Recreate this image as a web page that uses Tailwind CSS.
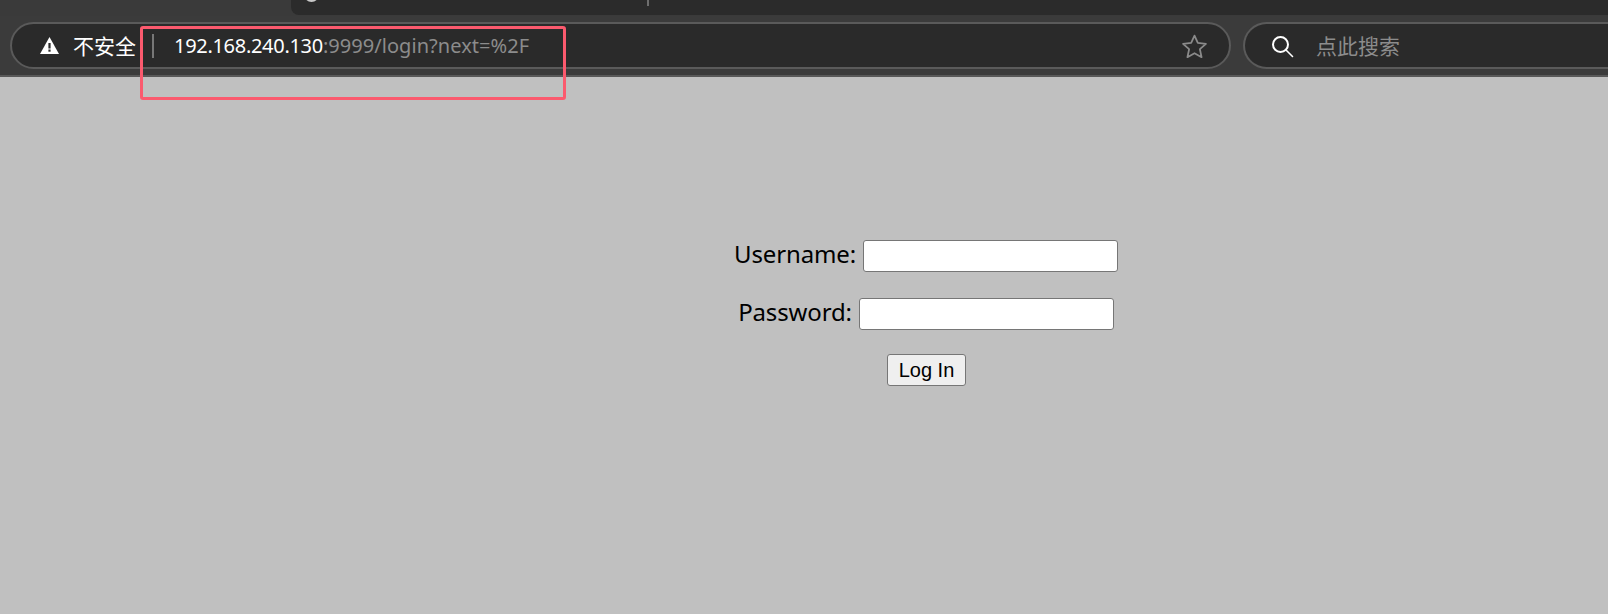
<!DOCTYPE html>
<html lang="zh">
<head>
<meta charset="utf-8">
<title>Login</title>
<script src="https://cdn.jsdelivr.net/npm/@tailwindcss/browser@4"></script>
</head>
<body class="m-0 h-[614px] w-[1608px] overflow-hidden bg-[#c0c0c0] font-['Noto_Sans','Noto_Sans_CJK_SC',sans-serif]">
<div class="relative h-full w-full">
  <header class="h-[77px] border-b-2 border-[#585858] bg-[#3b3b3b]">
    <div class="flex h-[16px] bg-[#3a3a3a] pl-[291px]">
      <div class="relative h-[15px] flex-1 overflow-hidden rounded-bl-lg bg-[#2b2b2b]">
        <div class="absolute left-[13px] top-[-13px] h-[15px] w-[15px] rounded-full border-[3px] border-[#c8c8c8]"></div>
        <div class="absolute left-[356px] top-0 h-[6px] w-[2px] bg-[#6e6e6e]"></div>
      </div>
    </div>
    <div class="flex gap-[12px] pl-[10px] pt-[6px]">
      <div class="flex h-[47px] w-[1221px] items-center rounded-full border-2 border-[#5a5a5a] bg-[#2a2a2a]">
        <svg class="ml-[28px] h-[19px] w-[19px]" viewBox="0 0 19 19"><path fill="#fff" d="M9.5 1 19 18H0Z"/><rect x="8.4" y="7" width="2.2" height="5.5" fill="#2a2a2a"/><rect x="8.4" y="13.5" width="2.2" height="2.2" fill="#2a2a2a"/></svg>
        <span class="ml-[14px] whitespace-nowrap pt-[2px] text-[21px] leading-none text-white">不安全</span>
        <span class="ml-[16px] h-[24px] w-[2px] bg-[#777777]"></span>
        <span class="ml-[20px] whitespace-nowrap pt-[1px] text-[20px] leading-none tracking-[-0.3px] text-white">192.168.240.130<span class="tracking-[0.05px] text-[#8c8c8c]">:9999/login?next=%2F</span></span>
        <svg class="ml-auto mr-[21px] mt-[1px] h-[27px] w-[27px]" viewBox="0 0 26 26" fill="none" stroke="#8a8a8a" stroke-width="1.7" stroke-linejoin="round"><path d="M13 2.5 16.2 9.6 24 10.4 18.2 15.6 19.8 23.3 13 19.4 6.2 23.3 7.8 15.6 2 10.4 9.8 9.6Z"/></svg>
      </div>
      <div class="flex h-[47px] flex-1 items-center rounded-l-full border-y-2 border-l-2 border-[#5a5a5a] bg-[#2a2a2a]">
        <svg class="ml-[25px] h-[24px] w-[24px]" viewBox="0 0 24 24" fill="none" stroke="#fff" stroke-linecap="round"><circle cx="10.5" cy="10.5" r="7.5" stroke-width="2"/><path d="M16 16 22.5 22.5" stroke-width="1.6"/></svg>
        <span class="ml-[22px] whitespace-nowrap pt-[1px] text-[21px] leading-none text-[#8c8c8c]">点此搜索</span>
      </div>
    </div>
  </header>
  <main class="flex flex-col items-center pl-[244px] pt-[163px] text-black">
    <div class="flex h-[32px] items-center gap-[7px]">
      <label class="pb-[5px] text-[24px] leading-none tracking-[-0.15px]">Username:</label>
      <input type="text" class="box-border h-[32px] w-[255px] rounded-[3px] border border-[#767676] bg-white">
    </div>
    <div class="mt-[26px] flex h-[32px] items-center gap-[7px]">
      <label class="pb-[5px] text-[24px] leading-none tracking-[-0.15px]">Password:</label>
      <input type="password" class="box-border h-[32px] w-[255px] rounded-[3px] border border-[#767676] bg-white">
    </div>
    <button class="ml-[1px] mt-[24px] box-border h-[32px] w-[79px] rounded-[3px] border border-[#767676] bg-[#efefef] font-['Liberation_Sans',sans-serif] text-[20px] leading-none text-black">Log In</button>
  </main>
  <div class="absolute left-[140px] top-[26px] h-[74px] w-[426px] rounded-[3px] border-[3px] border-[#fb5a6e]"></div>
</div>
</body>
</html>
